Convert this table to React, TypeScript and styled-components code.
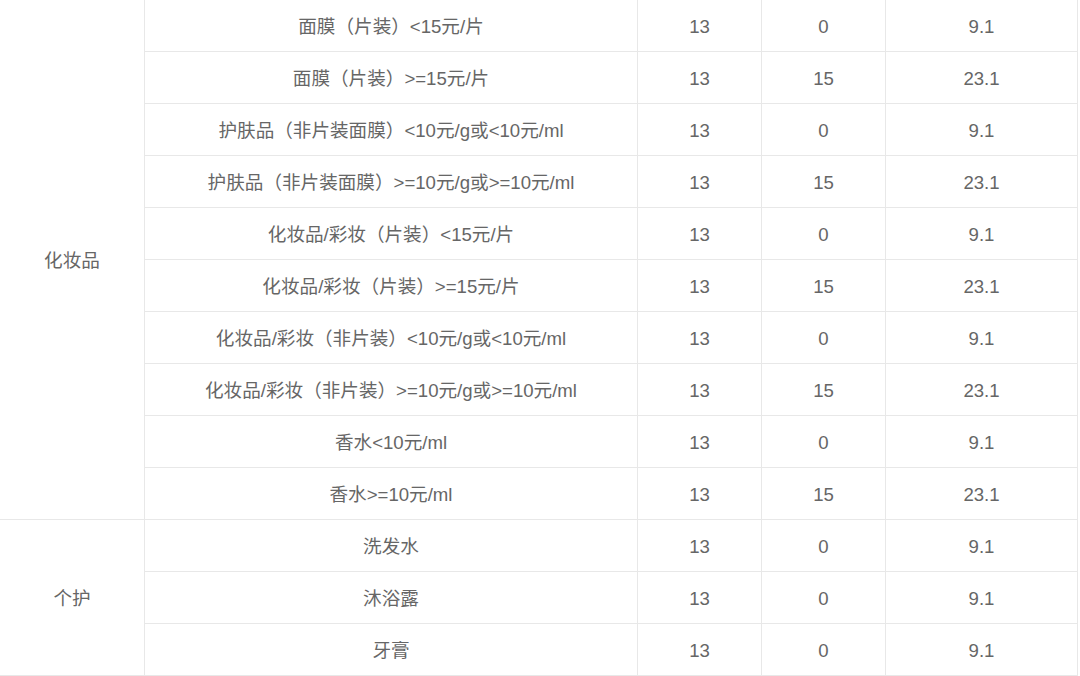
import React from "react";
import styled, { createGlobalStyle } from "styled-components";

const Global = createGlobalStyle`
  html, body { margin: 0; padding: 0; background: #fff; overflow: hidden; }
  body { font-family: "Liberation Sans", "Noto Sans CJK SC", sans-serif; }
`;

const Table = styled.table`
  border-collapse: collapse;
  table-layout: fixed;
  width: 1078px;
  margin: -1px 0 0 -1px;
  color: #666;
  font-size: 18.6px;
`;

const Col = styled.col<{ $w: number }>`
  width: ${(p) => p.$w}px;
`;

const Cell = styled.td`
  border: 1px solid #e8e8e8;
  height: 52px;
  padding: 2px 0 0;
  text-align: center;
  vertical-align: middle;
  line-height: 20px;
  box-sizing: border-box;
`;

type Row = { name: string; a: string; b: string; c: string };

const groups: { cat: string; rows: Row[] }[] = [
  {
    cat: "化妆品",
    rows: [
      { name: "面膜（片装）<15元/片", a: "13", b: "0", c: "9.1" },
      { name: "面膜（片装）>=15元/片", a: "13", b: "15", c: "23.1" },
      { name: "护肤品（非片装面膜）<10元/g或<10元/ml", a: "13", b: "0", c: "9.1" },
      { name: "护肤品（非片装面膜）>=10元/g或>=10元/ml", a: "13", b: "15", c: "23.1" },
      { name: "化妆品/彩妆（片装）<15元/片", a: "13", b: "0", c: "9.1" },
      { name: "化妆品/彩妆（片装）>=15元/片", a: "13", b: "15", c: "23.1" },
      { name: "化妆品/彩妆（非片装）<10元/g或<10元/ml", a: "13", b: "0", c: "9.1" },
      { name: "化妆品/彩妆（非片装）>=10元/g或>=10元/ml", a: "13", b: "15", c: "23.1" },
      { name: "香水<10元/ml", a: "13", b: "0", c: "9.1" },
      { name: "香水>=10元/ml", a: "13", b: "15", c: "23.1" },
    ],
  },
  {
    cat: "个护",
    rows: [
      { name: "洗发水", a: "13", b: "0", c: "9.1" },
      { name: "沐浴露", a: "13", b: "0", c: "9.1" },
      { name: "牙膏", a: "13", b: "0", c: "9.1" },
    ],
  },
];

export default function App() {
  return (
    <>
      <Global />
      <Table>
        <colgroup>
          <Col $w={145} />
          <Col $w={493} />
          <Col $w={124} />
          <Col $w={124} />
          <Col $w={192} />
        </colgroup>
        <tbody>
          {groups.map((g) =>
            g.rows.map((r, i) => (
              <tr key={g.cat + i}>
                {i === 0 && <Cell rowSpan={g.rows.length}>{g.cat}</Cell>}
                <Cell>{r.name}</Cell>
                <Cell>{r.a}</Cell>
                <Cell>{r.b}</Cell>
                <Cell>{r.c}</Cell>
              </tr>
            ))
          )}
        </tbody>
      </Table>
    </>
  );
}
